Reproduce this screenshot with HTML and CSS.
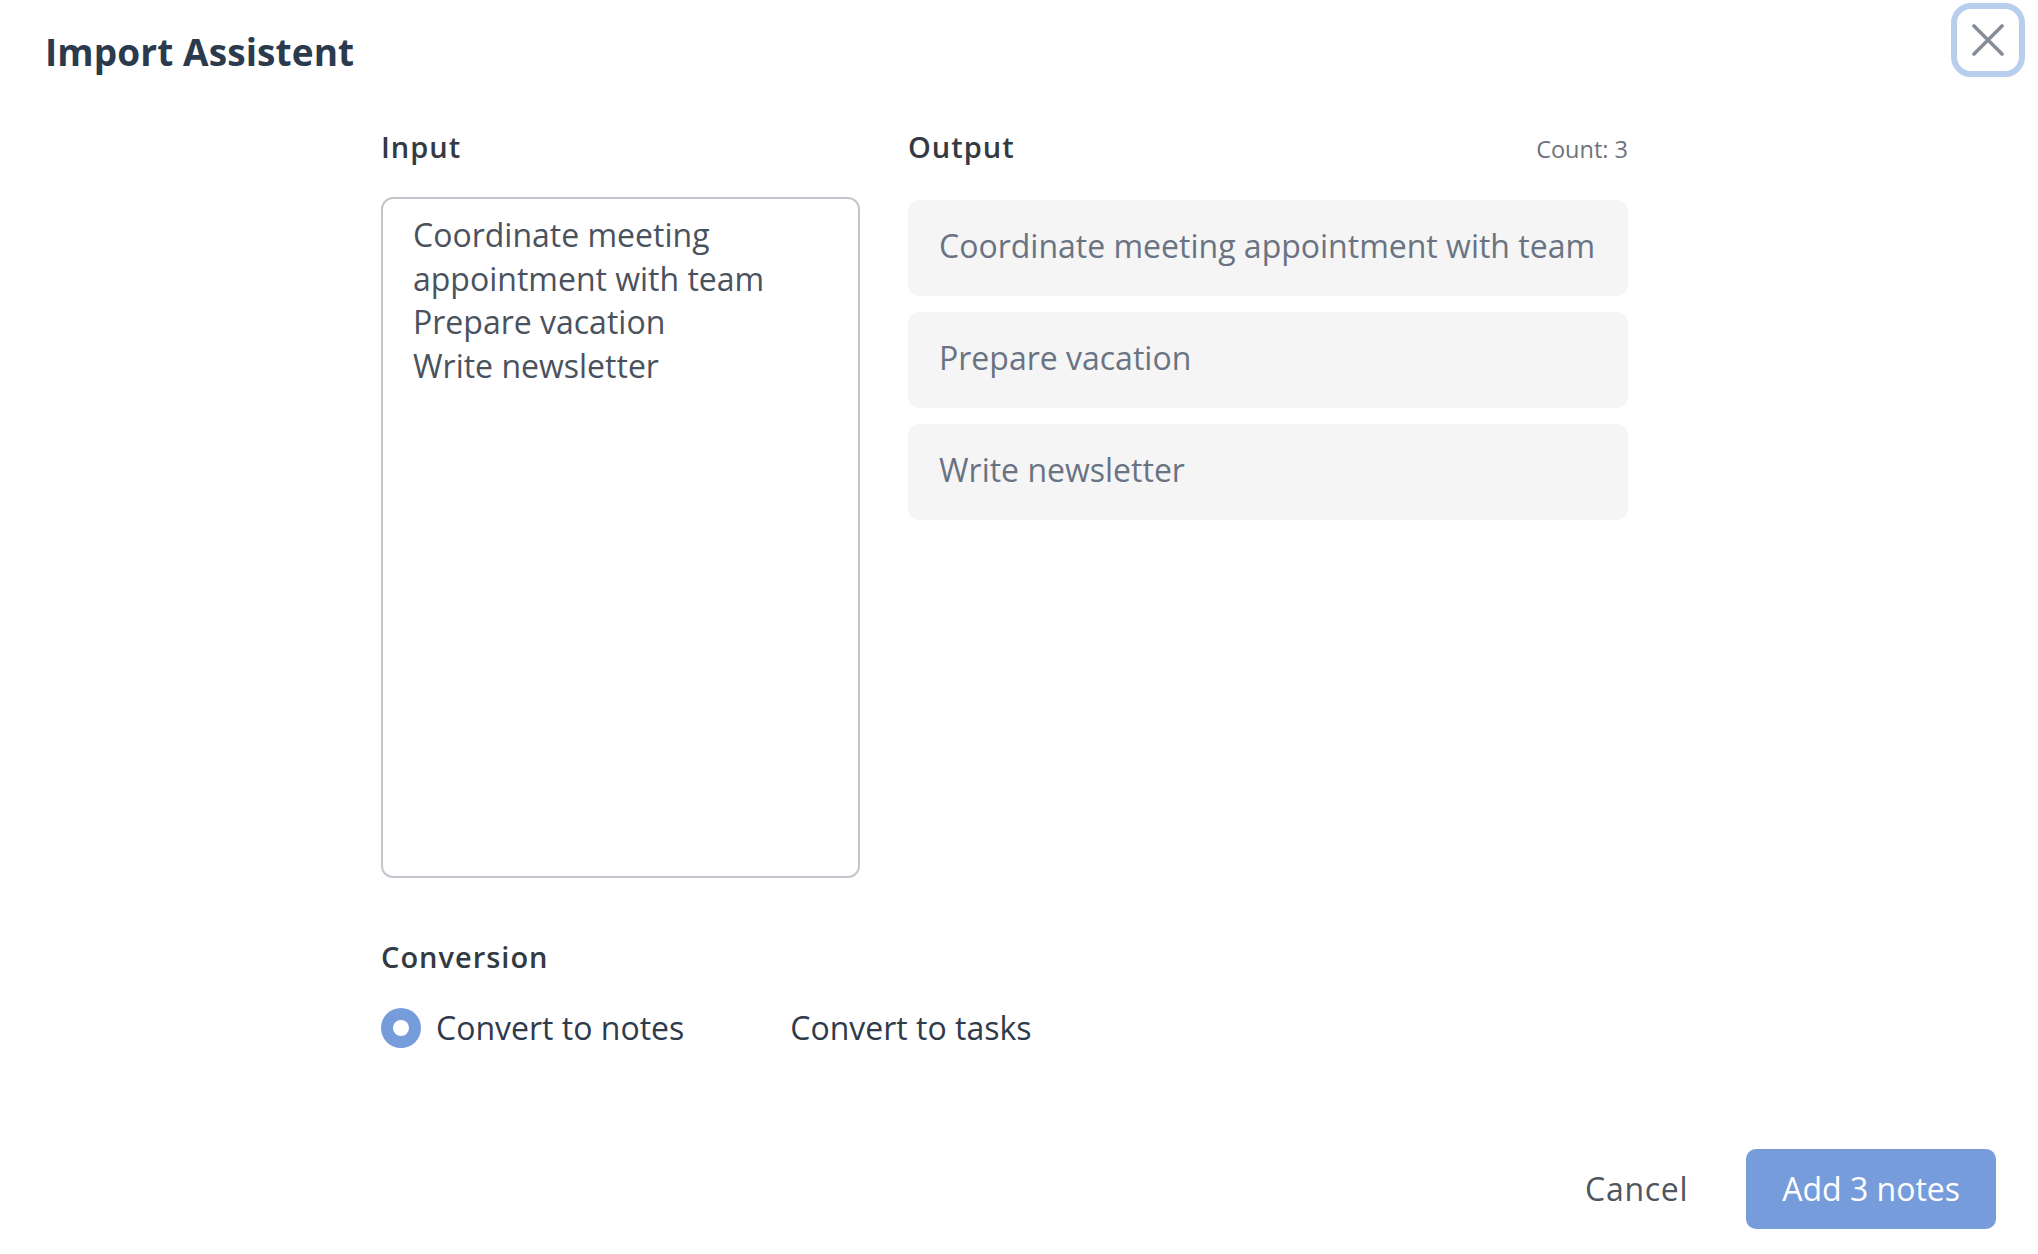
FILE: index.html
```html
<!DOCTYPE html>
<html lang="en">
<head>
<meta charset="utf-8">
<title>Import Assistent</title>
<link rel="stylesheet" href="styles.css">
</head>
<body>
<div class="dialog">
  <header class="header">
    <h1 class="title">Import Assistent</h1>
    <button class="close" aria-label="Close">
      <svg viewBox="0 0 32 32" width="32" height="32" aria-hidden="true">
        <path d="M2 2 L30 30 M30 2 L2 30" fill="none" stroke="#858d96" stroke-width="3.6" stroke-linecap="round"/>
      </svg>
    </button>
  </header>

  <main class="main">
    <div class="columns">
      <section class="col col-input">
        <div class="col-head">
          <span class="label">Input</span>
        </div>
        <textarea class="input-area" spellcheck="false">Coordinate meeting appointment with team
Prepare vacation
Write newsletter</textarea>
      </section>

      <section class="col col-output">
        <div class="col-head">
          <span class="label">Output</span>
          <span class="count">Count: 3</span>
        </div>
        <ul class="output-list">
          <li class="output-item">Coordinate meeting appointment with team</li>
          <li class="output-item">Prepare vacation</li>
          <li class="output-item">Write newsletter</li>
        </ul>
      </section>
    </div>

    <section class="conversion">
      <div class="label">Conversion</div>
      <div class="options">
        <label class="option">
          <span class="radio checked"></span>
          <span class="option-text">Convert to notes</span>
        </label>
        <label class="option">
          <span class="radio"></span>
          <span class="option-text">Convert to tasks</span>
        </label>
      </div>
    </section>
  </main>

  <footer class="footer">
    <button class="btn-cancel">Cancel</button>
    <button class="btn-primary">Add 3 notes</button>
  </footer>
</div>
</body>
</html>
```

FILE: styles.css
```css
* {
  box-sizing: border-box;
}

html, body {
  margin: 0;
  padding: 0;
  background: #ffffff;
}

body {
  font-family: "Open Sans", "Noto Sans", "Liberation Sans", sans-serif;
  color: #343a43;
  width: 2038px;
  height: 1254px;
  overflow: hidden;
}

.dialog {
  display: flex;
  flex-direction: column;
  height: 100%;
}

/* Header */
.header {
  display: flex;
  justify-content: space-between;
  align-items: flex-start;
  padding: 0 13px 0 45px;
  height: 77px;
}

.title {
  margin: 30px 0 0;
  font-size: 37px;
  line-height: 44px;
  font-weight: 700;
  color: #2c3a4e;
  letter-spacing: 0.1px;
}

.close {
  margin-top: 3px;
  width: 74px;
  height: 74px;
  border: 6px solid #b9cdef;
  border-radius: 20px;
  background: #ffffff;
  display: flex;
  align-items: center;
  justify-content: center;
  padding: 0;
  cursor: pointer;
}

.close svg {
  display: block;
}

/* Main */
.main {
  padding-left: 381px;
}

.columns {
  display: flex;
  gap: 48px;
  margin-top: 50px;
}

.col-input {
  width: 479px;
}

.col-output {
  width: 720px;
}

.col-head {
  display: flex;
  justify-content: space-between;
  align-items: baseline;
  height: 39px;
}

.label {
  font-size: 29px;
  line-height: 39px;
  font-weight: 600;
  color: #343a43;
  letter-spacing: 1px;
}

.count {
  font-size: 23.5px;
  line-height: 39px;
  color: #6c737d;
}

.input-area {
  display: block;
  margin-top: 31px;
  width: 479px;
  height: 681px;
  border: 2px solid #c3c7cd;
  border-radius: 12px;
  padding: 14px 30px;
  font-family: inherit;
  font-size: 32px;
  line-height: 43.5px;
  color: #4a525d;
  resize: none;
  overflow: hidden;
  outline: none;
  background: #ffffff;
}

.output-list {
  list-style: none;
  margin: 34px 0 0;
  padding: 0;
  display: flex;
  flex-direction: column;
  gap: 16px;
}

.output-item {
  background: #f5f5f5;
  border-radius: 12px;
  padding: 24px 31px 28px;
  font-size: 32px;
  line-height: 44px;
  color: #6a7382;
  white-space: nowrap;
}

/* Conversion */
.conversion {
  margin-top: 59px;
}

.options {
  display: flex;
  align-items: center;
  gap: 51px;
  margin-top: 30px;
  height: 44px;
}

.option {
  display: flex;
  align-items: center;
  gap: 15px;
}

.radio {
  width: 40px;
  height: 40px;
  border-radius: 50%;
  background: #ffffff;
  flex: none;
}

.radio.checked {
  background: #779cdc;
  display: flex;
  align-items: center;
  justify-content: center;
}

.radio.checked::after {
  content: "";
  width: 16px;
  height: 16px;
  border-radius: 50%;
  background: #ffffff;
}

.option-text {
  font-size: 32px;
  line-height: 44px;
  color: #2f3a4b;
}

/* Footer */
.footer {
  display: flex;
  justify-content: flex-end;
  align-items: center;
  gap: 58px;
  padding-right: 42px;
  margin-top: 99px;
}

.btn-cancel {
  background: none;
  border: none;
  padding: 0;
  font-family: inherit;
  font-size: 32px;
  line-height: 44px;
  color: #4f5660;
  letter-spacing: 0.7px;
  cursor: pointer;
}

.btn-primary {
  height: 80px;
  padding: 0 36px;
  border: none;
  border-radius: 10px;
  background: #779cdb;
  color: #ffffff;
  font-family: inherit;
  font-size: 32px;
  line-height: 44px;
  cursor: pointer;
}
```
